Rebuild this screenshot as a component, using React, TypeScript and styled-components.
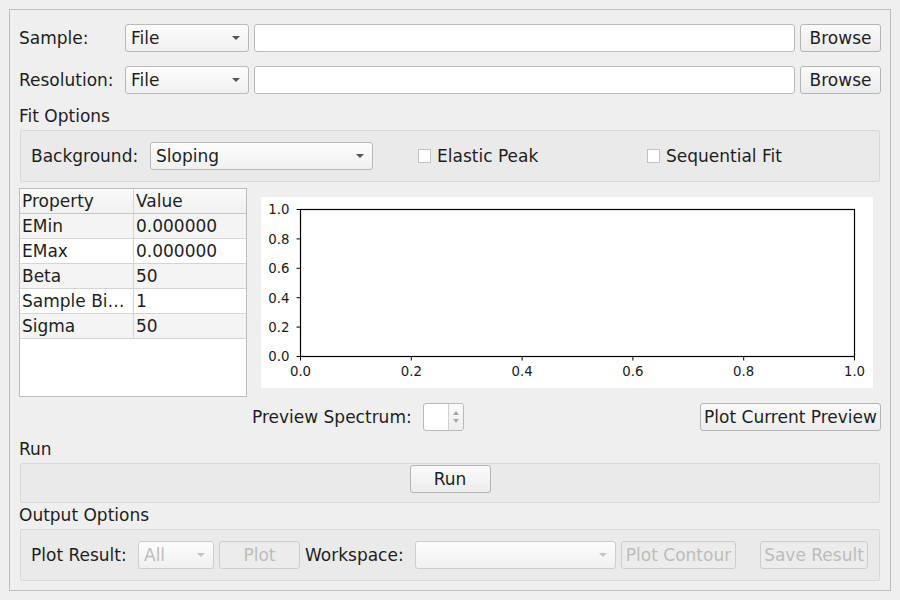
import React from 'react';
import styled, { createGlobalStyle, css } from 'styled-components';

const GlobalStyle = createGlobalStyle`
  html, body {
    margin: 0;
    padding: 0;
    background: #efefef;
  }
  body {
    font-family: 'DejaVu Sans', 'Liberation Sans', sans-serif;
    font-size: 17px;
    color: #1e1e1e;
  }
`;

const Window = styled.div`
  width: 900px;
  height: 600px;
  padding: 9px;
  box-sizing: border-box;
`;

const Frame = styled.div`
  height: 582px;
  box-sizing: border-box;
  border: 1px solid #bdbdbd;
  padding: 14px 9px 0 9px;
  display: flex;
  flex-direction: column;
`;

const FileRow = styled.div<{ top?: number }>`
  display: flex;
  align-items: center;
  gap: 5px;
  height: 28px;
  margin-top: ${({ top }) => top ?? 0}px;
`;

const Label = styled.span<{ width?: number }>`
  white-space: nowrap;
  line-height: 20px;
  ${({ width }) => width !== undefined && `width: ${width}px; flex: none;`}
`;

const SectionTitle = styled.div<{ top: number }>`
  margin-top: ${({ top }) => top}px;
  height: 20px;
  line-height: 20px;
`;

const GroupBox = styled.div<{ height: number; top?: number }>`
  margin: ${({ top }) => top ?? 4}px 1px 0 1px;
  height: ${({ height }) => height}px;
  box-sizing: border-box;
  border: 1px solid #d9d9d9;
  border-radius: 2px;
  background: #eaeaea;
  display: flex;
  align-items: center;
`;

const controlBase = css`
  box-sizing: border-box;
  height: 28px;
  border-radius: 3px;
  font-family: inherit;
  font-size: inherit;
  flex: none;
`;

const Combo = styled.div<{ width: number; disabled?: boolean }>`
  ${controlBase}
  width: ${({ width }) => width}px;
  border: 1px solid ${({ disabled }) => (disabled ? '#cdcdcd' : '#b9b9b9')};
  background: linear-gradient(#fdfdfd, #f0f0f0);
  color: ${({ disabled }) => (disabled ? '#bcbcbc' : '#1e1e1e')};
  display: flex;
  align-items: center;
  padding: 0 8px 0 5px;
  &::after {
    content: '';
    margin-left: auto;
    border-left: 4px solid transparent;
    border-right: 4px solid transparent;
    border-top: 4px solid ${({ disabled }) => (disabled ? '#c4c4c4' : '#555')};
  }
`;

const LineEdit = styled.div`
  ${controlBase}
  flex: 1;
  border: 1px solid #b9b9b9;
  background: #fff;
`;

const Button = styled.div<{ width: number; disabled?: boolean }>`
  ${controlBase}
  width: ${({ width }) => width}px;
  border: 1px solid ${({ disabled }) => (disabled ? '#cdcdcd' : '#b5b5b5')};
  background: ${({ disabled }) => (disabled ? '#ececec' : 'linear-gradient(#fafafa, #ececec)')};
  color: ${({ disabled }) => (disabled ? '#bcbcbc' : '#1e1e1e')};
  display: flex;
  align-items: center;
  justify-content: center;
  white-space: nowrap;
`;

const Check = styled.label<{ width?: number }>`
  display: flex;
  align-items: center;
  gap: 6px;
  ${({ width }) => width !== undefined && `width: ${width}px; flex: none;`}
  &::before {
    content: '';
    width: 13px;
    height: 14px;
    box-sizing: border-box;
    border: 1px solid #c2c2c2;
    background: #fff;
  }
`;

const FitBox = styled(GroupBox)`
  padding-left: 10px;
`;

const Middle = styled.div`
  margin-top: 6px;
  height: 209px;
  display: flex;
  align-items: center;
  gap: 14px;
`;

const Table = styled.div`
  width: 228px;
  height: 209px;
  box-sizing: border-box;
  border: 1px solid #bdbdbd;
  background: #fff;
  flex: none;
  align-self: stretch;
`;

const TRow = styled.div<{ header?: boolean; shade?: boolean }>`
  display: grid;
  grid-template-columns: 113px 1fr;
  height: 25px;
  box-sizing: border-box;
  border-bottom: 1px solid #d4d4d4;
  background: ${({ header, shade }) =>
    header ? 'linear-gradient(#fbfbfb, #f0f0f0)' : shade ? '#f4f4f4' : '#fff'};
  ${({ header }) => header && 'border-bottom-color: #c6c6c6;'}
`;

const TCell = styled.div`
  padding-left: 2px;
  line-height: 24px;
  white-space: nowrap;
  overflow: hidden;
  & + & {
    border-left: 1px solid #d4d4d4;
  }
`;

const PlotArea = styled.div`
  width: 612px;
  height: 191px;
  background: #fff;
  flex: none;
`;

const PreviewRow = styled.div`
  margin-top: 5px;
  height: 29px;
  display: flex;
  align-items: center;
`;

const PreviewLabel = styled(Label)`
  margin-left: 233px;
`;

const SpinBox = styled.div`
  ${controlBase}
  width: 41px;
  height: 28px;
  border: 1px solid #b9b9b9;
  background: #fff;
  display: flex;
  justify-content: flex-end;
`;

const SpinArrows = styled.div`
  width: 14px;
  border-left: 1px solid #d0d0d0;
  background: linear-gradient(#fafafa, #eeeeee);
  border-radius: 0 3px 3px 0;
  display: flex;
  flex-direction: column;
  align-items: center;
  justify-content: center;
  gap: 4px;
`;

const Arrow = styled.span<{ up?: boolean }>`
  border-left: 3px solid transparent;
  border-right: 3px solid transparent;
  ${({ up }) => (up ? 'border-bottom: 4px solid #a8a8a8;' : 'border-top: 4px solid #a8a8a8;')}
`;

const RunBox = styled(GroupBox)`
  justify-content: center;
  align-items: flex-start;
  padding-top: 1px;
`;

const OutputBox = styled(GroupBox)`
  padding: 0 11px 0 10px;
  gap: 5px;
`;

const Push = styled.div`
  margin-left: auto;
`;

const Gap = styled.div<{ width: number }>`
  width: ${({ width }) => width}px;
  flex: none;
`;

const rows = [
  ['EMin', '0.000000'],
  ['EMax', '0.000000'],
  ['Beta', '50'],
  ['Sample Bi…', '1'],
  ['Sigma', '50'],
];

const ticks = [0, 0.2, 0.4, 0.6, 0.8, 1];

const EmptyPlot = () => {
  const x0 = 39.5;
  const y0 = 12.5;
  const w = 554;
  const h = 147;
  return (
    <svg width={612} height={191} fontFamily="'DejaVu Sans', sans-serif" fontSize={13.3} fill="#1a1a1a">
      <rect x={x0} y={y0} width={w} height={h} fill="none" stroke="#000" strokeWidth={1.2} />
      {ticks.map((t) => {
        const y = y0 + h * (1 - t);
        const x = x0 + w * t;
        return (
          <g key={t}>
            <line x1={x0 - 4} x2={x0} y1={y} y2={y} stroke="#000" strokeWidth={1} />
            <text x={28.5} y={y + 4.8} textAnchor="end">
              {t.toFixed(1)}
            </text>
            <line x1={x} x2={x} y1={y0 + h} y2={y0 + h + 4} stroke="#000" strokeWidth={1} />
            <text x={x} y={179} textAnchor="middle">
              {t.toFixed(1)}
            </text>
          </g>
        );
      })}
    </svg>
  );
};

const App = () => (
  <Window>
    <GlobalStyle />
    <Frame>
      <FileRow>
        <Label width={101}>Sample:</Label>
        <Combo width={124}>File</Combo>
        <LineEdit />
        <Button width={81}>Browse</Button>
      </FileRow>
      <FileRow top={14}>
        <Label width={101}>Resolution:</Label>
        <Combo width={124}>File</Combo>
        <LineEdit />
        <Button width={81}>Browse</Button>
      </FileRow>

      <SectionTitle top={12}>Fit Options</SectionTitle>
      <FitBox height={52}>
        <Label width={119}>Background:</Label>
        <Combo width={223}>Sloping</Combo>
        <Gap width={45} />
        <Check width={229}>Elastic Peak</Check>
        <Check>Sequential Fit</Check>
      </FitBox>

      <Middle>
        <Table>
          <TRow header>
            <TCell>Property</TCell>
            <TCell>Value</TCell>
          </TRow>
          {rows.map(([name, value], i) => (
            <TRow key={name} shade={i % 2 === 0}>
              <TCell>{name}</TCell>
              <TCell>{value}</TCell>
            </TRow>
          ))}
        </Table>
        <PlotArea>
          <EmptyPlot />
        </PlotArea>
      </Middle>

      <PreviewRow>
        <PreviewLabel width={171}>Preview Spectrum:</PreviewLabel>
        <SpinBox>
          <SpinArrows>
            <Arrow up />
            <Arrow />
          </SpinArrows>
        </SpinBox>
        <Push />
        <Button width={181}>Plot Current Preview</Button>
      </PreviewRow>

      <SectionTitle top={8}>Run</SectionTitle>
      <RunBox height={40}>
        <Button width={81}>Run</Button>
      </RunBox>

      <SectionTitle top={2}>Output Options</SectionTitle>
      <OutputBox height={52}>
        <Label width={102}>Plot Result:</Label>
        <Combo width={76} disabled>
          All
        </Combo>
        <Button width={81} disabled>
          Plot
        </Button>
        <Label width={105}>Workspace:</Label>
        <Combo width={201} disabled />
        <Button width={115} disabled>
          Plot Contour
        </Button>
        <Push />
        <Button width={108} disabled>
          Save Result
        </Button>
      </OutputBox>
    </Frame>
  </Window>
);

export default App;
